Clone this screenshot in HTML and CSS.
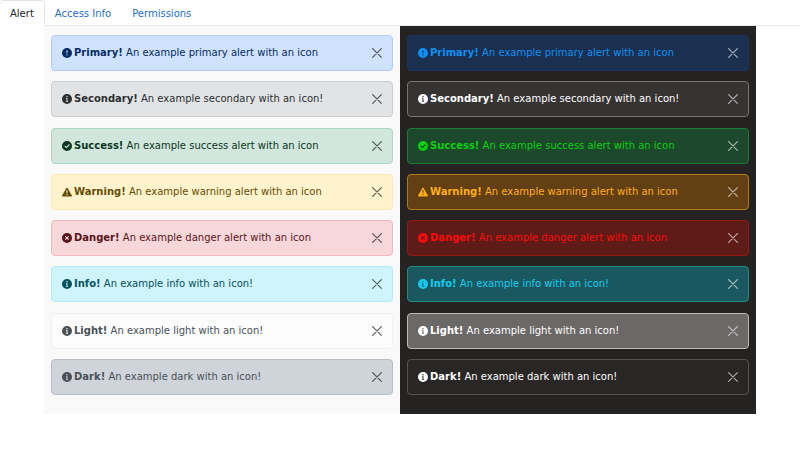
FILE: index.html
```
<!DOCTYPE html>
<html lang="en">
<head>
<meta charset="utf-8">
<meta name="viewport" content="width=device-width, initial-scale=1">
<title>Alert</title>
<link rel="stylesheet" href="styles.css">
</head>
<body>
<svg class="sprite" aria-hidden="true">
  <symbol id="exclamation" viewBox="0 0 16 16"><path fill-rule="evenodd" d="M16 8A8 8 0 1 1 0 8a8 8 0 0 1 16 0M8 3.6a1 1 0 0 0-1 1.1l.4 4h1.2l.4-4a1 1 0 0 0-1-1.1M8 10a1 1 0 1 0 0 2 1 1 0 0 0 0-2"/></symbol>
  <symbol id="info" viewBox="0 0 16 16"><path fill-rule="evenodd" d="M16 8A8 8 0 1 1 0 8a8 8 0 0 1 16 0M8 3.2a1.2 1.2 0 1 0 0 2.4 1.2 1.2 0 0 0 0-2.4M6.2 6.8v1.2h1v3H6.200v1.200h3.600v-1.200h-1V6.800z"/></symbol>
  <symbol id="check" viewBox="0 0 16 16"><path fill-rule="evenodd" d="M16 8A8 8 0 1 1 0 8a8 8 0 0 1 16 0M11.2 4.9 7.2 9.1 5 7 3.8 8.2l3.4 3.4 5.3-5.4z"/></symbol>
  <symbol id="triangle" viewBox="0 0 16 16"><path fill-rule="evenodd" d="M7 1.4a1.15 1.15 0 0 1 2 0l6.8 12c.5.8 0 1.7-1 1.7H1.2c-1 0-1.5-.9-1-1.7zM8 5a1 1 0 0 0-1 1.1l.4 4h1.2l.4-4A1 1 0 0 0 8 5m0 6.2a1 1 0 1 0 0 2 1 1 0 0 0 0-2"/></symbol>
  <symbol id="cross" viewBox="0 0 16 16"><path fill-rule="evenodd" d="M16 8A8 8 0 1 1 0 8a8 8 0 0 1 16 0M5.9 4.7 4.7 5.9 6.8 8l-2.1 2.1 1.2 1.2L8 9.2l2.1 2.1 1.2-1.2L9.2 8l2.1-2.1-1.2-1.2L8 6.8z"/></symbol>
  <symbol id="close" viewBox="0 0 16 16"><path fill="none" stroke="currentColor" stroke-width="2" stroke-linecap="round" d="m1 1 14 14m0-14-14 14"/></symbol>
</svg>
<nav class="tabs">
  <a class="tab active" href="#alert" aria-current="page">Alert</a>
  <a class="tab" href="#access">Access Info</a>
  <a class="tab" href="#permissions">Permissions</a>
</nav>
<main class="themes" id="alert">
  <section class="panel light-theme">
    <div class="alert primary" role="alert"><svg class="icon"><use href="#exclamation"/></svg><p><strong>Primary!</strong> An example primary alert with an icon</p><button class="close" aria-label="Close"><svg><use href="#close"/></svg></button></div>
    <div class="alert secondary" role="alert"><svg class="icon"><use href="#info"/></svg><p><strong>Secondary!</strong> An example secondary with an icon!</p><button class="close" aria-label="Close"><svg><use href="#close"/></svg></button></div>
    <div class="alert success" role="alert"><svg class="icon"><use href="#check"/></svg><p><strong>Success!</strong> An example success alert with an icon</p><button class="close" aria-label="Close"><svg><use href="#close"/></svg></button></div>
    <div class="alert warning" role="alert"><svg class="icon"><use href="#triangle"/></svg><p><strong>Warning!</strong> An example warning alert with an icon</p><button class="close" aria-label="Close"><svg><use href="#close"/></svg></button></div>
    <div class="alert danger" role="alert"><svg class="icon"><use href="#cross"/></svg><p><strong>Danger!</strong> An example danger alert with an icon</p><button class="close" aria-label="Close"><svg><use href="#close"/></svg></button></div>
    <div class="alert info" role="alert"><svg class="icon"><use href="#info"/></svg><p><strong>Info!</strong> An example info with an icon!</p><button class="close" aria-label="Close"><svg><use href="#close"/></svg></button></div>
    <div class="alert light" role="alert"><svg class="icon"><use href="#info"/></svg><p><strong>Light!</strong> An example light with an icon!</p><button class="close" aria-label="Close"><svg><use href="#close"/></svg></button></div>
    <div class="alert dark" role="alert"><svg class="icon"><use href="#info"/></svg><p><strong>Dark!</strong> An example dark with an icon!</p><button class="close" aria-label="Close"><svg><use href="#close"/></svg></button></div>
  </section>
  <section class="panel dark-theme">
    <div class="alert primary" role="alert"><svg class="icon"><use href="#exclamation"/></svg><p><strong>Primary!</strong> An example primary alert with an icon</p><button class="close" aria-label="Close"><svg><use href="#close"/></svg></button></div>
    <div class="alert secondary" role="alert"><svg class="icon"><use href="#info"/></svg><p><strong>Secondary!</strong> An example secondary with an icon!</p><button class="close" aria-label="Close"><svg><use href="#close"/></svg></button></div>
    <div class="alert success" role="alert"><svg class="icon"><use href="#check"/></svg><p><strong>Success!</strong> An example success alert with an icon</p><button class="close" aria-label="Close"><svg><use href="#close"/></svg></button></div>
    <div class="alert warning" role="alert"><svg class="icon"><use href="#triangle"/></svg><p><strong>Warning!</strong> An example warning alert with an icon</p><button class="close" aria-label="Close"><svg><use href="#close"/></svg></button></div>
    <div class="alert danger" role="alert"><svg class="icon"><use href="#cross"/></svg><p><strong>Danger!</strong> An example danger alert with an icon</p><button class="close" aria-label="Close"><svg><use href="#close"/></svg></button></div>
    <div class="alert info" role="alert"><svg class="icon"><use href="#info"/></svg><p><strong>Info!</strong> An example info with an icon!</p><button class="close" aria-label="Close"><svg><use href="#close"/></svg></button></div>
    <div class="alert light" role="alert"><svg class="icon"><use href="#info"/></svg><p><strong>Light!</strong> An example light with an icon!</p><button class="close" aria-label="Close"><svg><use href="#close"/></svg></button></div>
    <div class="alert dark" role="alert"><svg class="icon"><use href="#info"/></svg><p><strong>Dark!</strong> An example dark with an icon!</p><button class="close" aria-label="Close"><svg><use href="#close"/></svg></button></div>
  </section>
</main>
</body>
</html>
```
FILE: styles.css
```
* { box-sizing: border-box; }

body {
  margin: 0;
  background: #fff;
  font: 10px/16px "DejaVu Sans", sans-serif;
}

.sprite { display: none; }

.tabs {
  display: flex;
  border-bottom: 1px solid #e6e8ea;
}

.tab {
  margin-bottom: -1px;
  padding: 5px 10px 3px;
  border: 1px solid transparent;
  border-left-width: 0;
  border-radius: 4px 4px 0 0;
  color: #1f6fc4;
  text-decoration: none;
}

.tab.active {
  border-color: #e2e5e8 #e2e5e8 #fff;
  background: #fff;
  color: #212529;
}

.themes {
  display: grid;
  grid-template-columns: 1fr 1fr;
  width: 89%;
  margin: 0 auto;
}

.panel {
  display: flex;
  flex-direction: column;
  justify-content: space-between;
  min-height: 388px;
  padding: 9px 7px 19px;
}

.light-theme { background: #f9f9f9; }
.dark-theme { background: #242321; }

.alert {
  display: flex;
  align-items: center;
  gap: 2px;
  padding: 9px 10px;
  border: 1px solid;
  border-radius: 4px;
}

.alert p {
  flex: 1;
  margin: 0;
}

.icon {
  width: 10px;
  height: 10px;
  fill: currentColor;
}

.close {
  display: flex;
  padding: 0;
  border: 0;
  background: none;
  color: #000;
  opacity: 0.6;
}

.close svg {
  width: 10px;
  height: 10px;
}

.dark-theme .close { color: #fff; }

.light-theme .primary { background: #cfe2ff; border-color: #b0cffc; color: #052c65; }
.light-theme .secondary { background: #e2e3e5; border-color: #cbced1; color: #2b2f32; }
.light-theme .success { background: #d1e7dd; border-color: #b0d6c4; color: #0a3622; }
.light-theme .warning { background: #fff3cd; border-color: #ffeab0; color: #664d03; }
.light-theme .danger { background: #f8d7da; border-color: #f2bac0; color: #58151c; }
.light-theme .info { background: #cff4fc; border-color: #afecf9; color: #055160; }
.light-theme .light { background: #fcfcfd; border-color: #eff1f2; color: #495057; }
.light-theme .dark { background: #ced4da; border-color: #b7bec5; color: #495057; }

.dark-theme .primary { background: #1b304f; border-color: #183561; color: #0d8ff2; }
.dark-theme .secondary { background: #363333; border-color: #767474; color: #fff; }
.dark-theme .success { background: #1c482c; border-color: #1d7a32; color: #0bd00f; }
.dark-theme .warning { background: #634013; border-color: #b3791b; color: #ffae18; }
.dark-theme .danger { background: #5e1b18; border-color: #941818; color: #fa0b0d; }
.dark-theme .info { background: #1a5860; border-color: #258981; color: #14cbee; }
.dark-theme .light { background: #6b6868; border-color: #bab9b9; color: #fff; }
.dark-theme .dark { background: #292626; border-color: #545250; color: #fff; }
```
